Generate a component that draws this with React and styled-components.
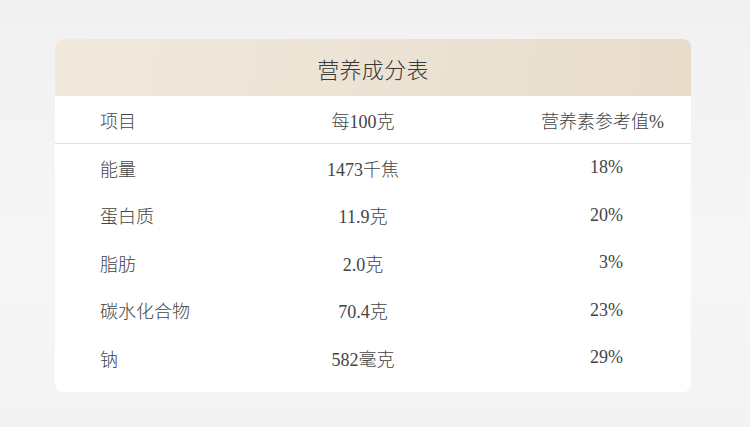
import React from 'react';
import styled, { createGlobalStyle } from 'styled-components';

const GlobalStyle = createGlobalStyle`
  html, body {
    margin: 0;
    padding: 0;
  }
  body {
    font-family: "Liberation Serif", "Noto Sans CJK SC", serif;
    background: linear-gradient(180deg, #f1f1f1 0%, #f6f6f6 60%, #f3f3f3 100%);
  }
`

const Page = styled.div`
  width: 750px;
  height: 427px;
  box-sizing: border-box;
  padding: 39px 59px 0 55px;
`

const Card = styled.div`
  width: 636px;
  background: #fff;
  border-radius: 8px;
  overflow: hidden;
  padding-bottom: 10px;
`

const Title = styled.div`
  height: 57px;
  display: flex;
  align-items: center;
  justify-content: center;
  background: linear-gradient(100deg, #f1e9dd 0%, #ece3d4 50%, #e8dccb 100%);
  color: #383838;
  font-size: 22px;
  font-weight: 300;
  letter-spacing: 0.3px;
`

const Row = styled.div`
  display: grid;
  grid-template-columns: 190px 146px 1fr;
  align-items: center;
  height: ${p => (p.$head ? '47px' : '47.5px')};
  padding: 0 ${p => (p.$head ? '27px' : '68px')} 0 45px;
  border-bottom: ${p => (p.$head ? '1px solid #e2e2e2' : 'none')};
  color: #444;
  font-size: 18px;
  font-weight: 300;
`

const Cell = styled.div`
  text-align: ${p => p.$align || 'left'};
  white-space: nowrap;
`

const rows = [
  ['能量', '1473千焦', '18%'],
  ['蛋白质', '11.9克', '20%'],
  ['脂肪', '2.0克', '3%'],
  ['碳水化合物', '70.4克', '23%'],
  ['钠', '582毫克', '29%'],
];

const App = () => (
  <>
    <GlobalStyle />
    <Page>
      <Card>
        <Title>营养成分表</Title>
        <Row $head>
          <Cell>项目</Cell>
          <Cell $align="center">每100克</Cell>
          <Cell $align="right">营养素参考值%</Cell>
        </Row>
        {rows.map(([name, amount, pct]) => (
          <Row key={name}>
            <Cell>{name}</Cell>
            <Cell $align="center">{amount}</Cell>
            <Cell $align="right">{pct}</Cell>
          </Row>
        ))}
      </Card>
    </Page>
  </>
);

export default App;
